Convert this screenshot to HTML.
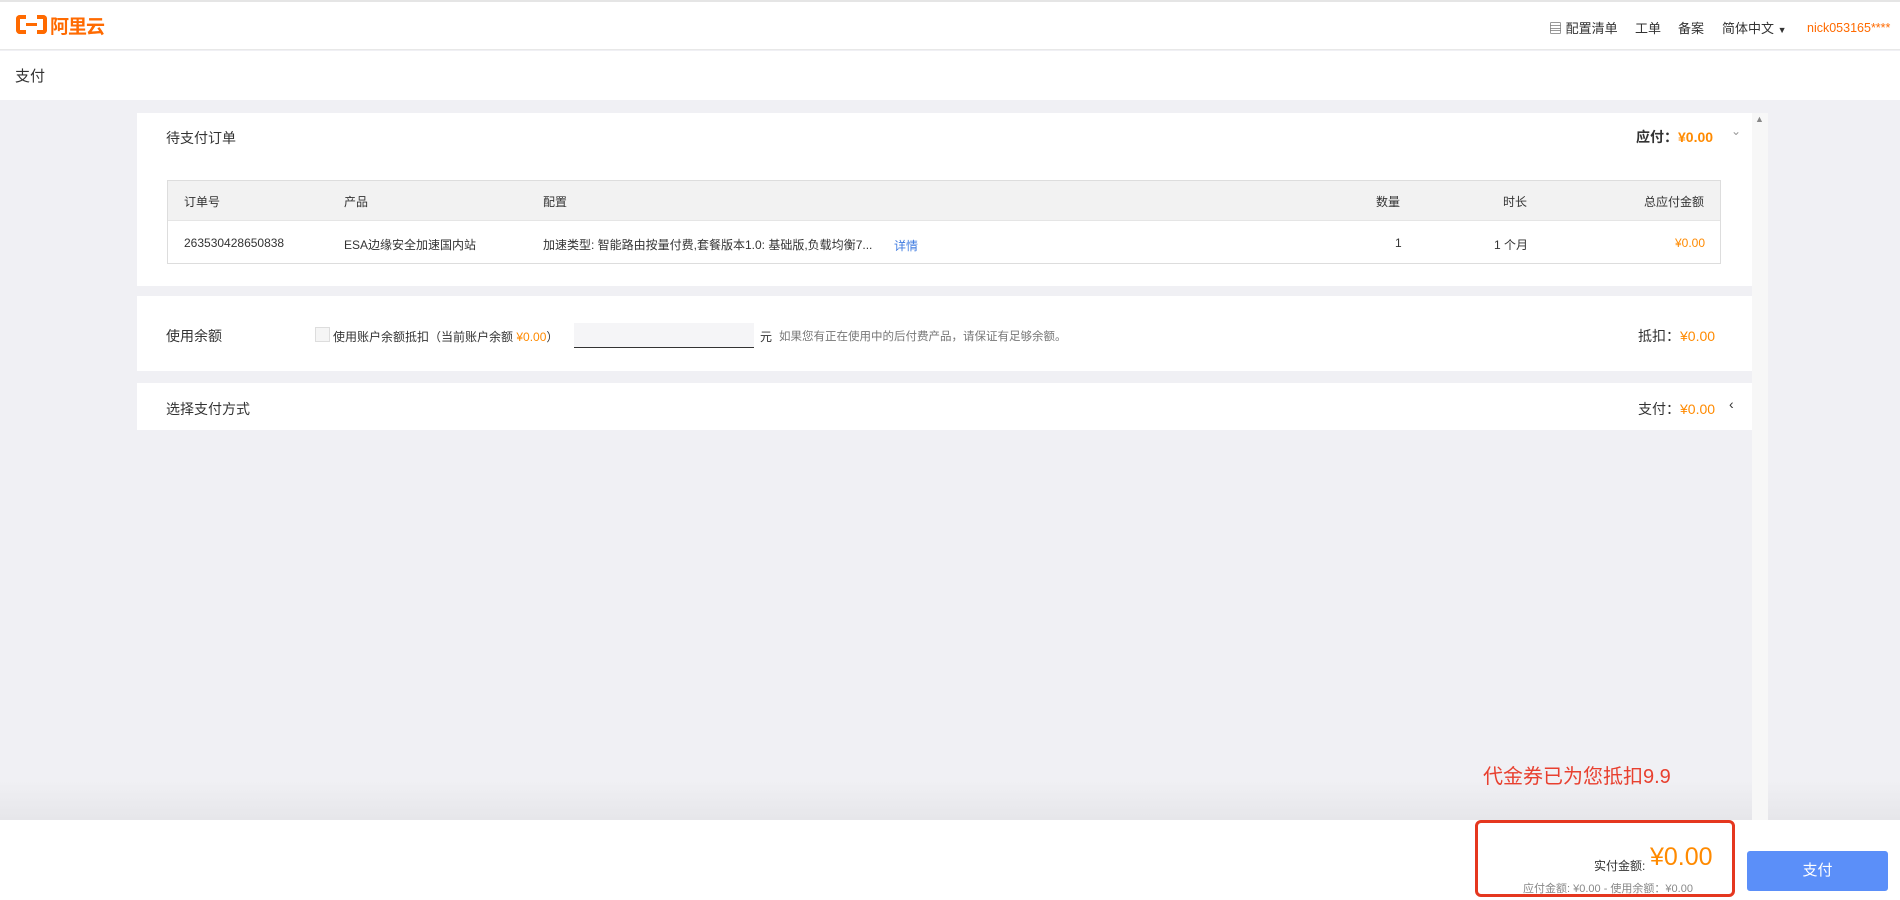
<!DOCTYPE html>
<html><head><meta charset="utf-8"><style>
*{margin:0;padding:0;box-sizing:border-box}
body{width:1900px;height:900px;overflow:hidden;background:#f0f0f4;font-family:"Liberation Sans","Noto Sans CJK SC",sans-serif;color:#333;position:relative;font-size:12px}
.a{position:absolute;white-space:nowrap}
.or{color:#ff8a00}
</style></head><body>
<div class="a" style="left:0;top:0;width:1900px;height:50px;background:#fff;border-top:2px solid #e5e5e5;border-bottom:1px solid #e8e8e8"></div>
<div class="a" style="left:16px;top:15px;width:10px;height:19px;border:4px solid #ff6a00;border-right:none;border-radius:4px 0 0 4px"></div>
<div class="a" style="left:37px;top:15px;width:10px;height:19px;border:4px solid #ff6a00;border-left:none;border-radius:0 4px 4px 0"></div>
<div class="a" style="left:26px;top:23px;width:11px;height:3px;background:#ff6a00"></div>
<div class="a" style="left:50px;top:12px;font-size:19px;font-weight:bold;color:#ff6a00;letter-spacing:-1px">阿里云</div>
<div class="a" style="left:1549px;top:18px;font-size:13px;color:#333">▤ 配置清单</div>
<div class="a" style="left:1635px;top:18px;font-size:13px">工单</div>
<div class="a" style="left:1678px;top:18px;font-size:13px">备案</div>
<div class="a" style="left:1722px;top:18px;font-size:13px">简体中文 <span style="font-size:9px">▼</span></div>
<div class="a" style="left:1807px;top:20px;font-size:12.5px;color:#ff6a00;line-height:16px">nick053165****</div>
<div class="a" style="left:0;top:51px;width:1900px;height:49px;background:#fff"></div>
<div class="a" style="left:15px;top:65px;font-size:15px">支付</div>

<div class="a" style="left:137px;top:113px;width:1615px;height:173px;background:#fff"></div>
<div class="a" style="left:166px;top:128px;font-size:14px">待支付订单</div>
<div class="a" style="left:1636px;top:127px;font-size:14px;font-weight:bold">应付：<span class="or">¥0.00</span></div>
<div class="a" style="left:1731px;top:124px;font-size:12px;color:#999">⌄</div>
<div class="a" style="left:167px;top:180px;width:1554px;height:84px;border:1px solid #ddd;background:#fff"></div>
<div class="a" style="left:168px;top:181px;width:1552px;height:40px;background:#f2f2f2;border-bottom:1px solid #e5e5e5"></div>
<div class="a" style="left:184px;top:193px">订单号</div>
<div class="a" style="left:344px;top:193px">产品</div>
<div class="a" style="left:543px;top:193px">配置</div>
<div class="a" style="left:1376px;top:193px">数量</div>
<div class="a" style="left:1503px;top:193px">时长</div>
<div class="a" style="left:1644px;top:193px">总应付金额</div>
<div class="a" style="left:184px;top:236px">263530428650838</div>
<div class="a" style="left:344px;top:236px">ESA边缘安全加速国内站</div>
<div class="a" style="left:543px;top:236px">加速类型: 智能路由按量付费,套餐版本1.0: 基础版,负载均衡7...</div>
<div class="a" style="left:894px;top:237px;color:#3f7be0">详情</div>
<div class="a" style="left:1395px;top:236px">1</div>
<div class="a" style="left:1494px;top:236px">1 个月</div>
<div class="a or" style="left:1675px;top:236px">¥0.00</div>

<div class="a" style="left:137px;top:296px;width:1615px;height:75px;background:#fff"></div>
<div class="a" style="left:166px;top:326px;font-size:14px">使用余额</div>
<div class="a" style="left:315px;top:327px;width:15px;height:15px;border:1px solid #ddd;background:#f5f5f5"></div>
<div class="a" style="left:333px;top:328px">使用账户余额抵扣（当前账户余额 <span class="or">¥0.00</span>）</div>
<div class="a" style="left:574px;top:323px;width:180px;height:25px;background:#f5f5f7;border-bottom:1px solid #333"></div>
<div class="a" style="left:760px;top:328px">元</div>
<div class="a" style="left:779px;top:328px;color:#777;font-size:11.5px">如果您有正在使用中的后付费产品，请保证有足够余额。</div>
<div class="a" style="left:1638px;top:326px;font-size:14px">抵扣：<span class="or">¥0.00</span></div>

<div class="a" style="left:137px;top:383px;width:1615px;height:47px;background:#fff"></div>
<div class="a" style="left:166px;top:399px;font-size:14px">选择支付方式</div>
<div class="a" style="left:1638px;top:399px;font-size:14px">支付：<span class="or">¥0.00</span></div>
<div class="a" style="left:1729px;top:396px;font-size:14px">‹</div>

<div class="a" style="left:1752px;top:113px;width:16px;height:706px;background:#f7f7f7"></div>
<div class="a" style="left:1755px;top:114px;font-size:9px;color:#888">▲</div>

<div class="a" style="left:0;top:780px;width:1900px;height:40px;background:linear-gradient(#f0f0f4,#e6e6ea)"></div>
<div class="a" style="left:1752px;top:780px;width:16px;height:40px;background:#f7f7f7"></div>
<div class="a" style="left:1483px;top:760px;font-size:20px;color:#e8402f">代金券已为您抵扣9.9</div>
<div class="a" style="left:0;top:820px;width:1900px;height:80px;background:#fff"></div>
<div class="a" style="left:1475px;top:820px;width:260px;height:77px;border:3px solid #e5371f;border-radius:6px"></div>
<div class="a" style="left:1594px;top:857px;font-size:12px">实付金额:</div>
<div class="a or" style="left:1650px;top:843px;font-size:25px">¥0.00</div>
<div class="a" style="left:1523px;top:880px;font-size:11px;color:#888">应付金额: ¥0.00 - 使用余额：¥0.00</div>
<div class="a" style="left:1747px;top:851px;width:141px;height:40px;background:#5b8ff9;border-radius:3px;color:#fff;font-size:15px;text-align:center;line-height:40px">支付</div>
</body></html>
